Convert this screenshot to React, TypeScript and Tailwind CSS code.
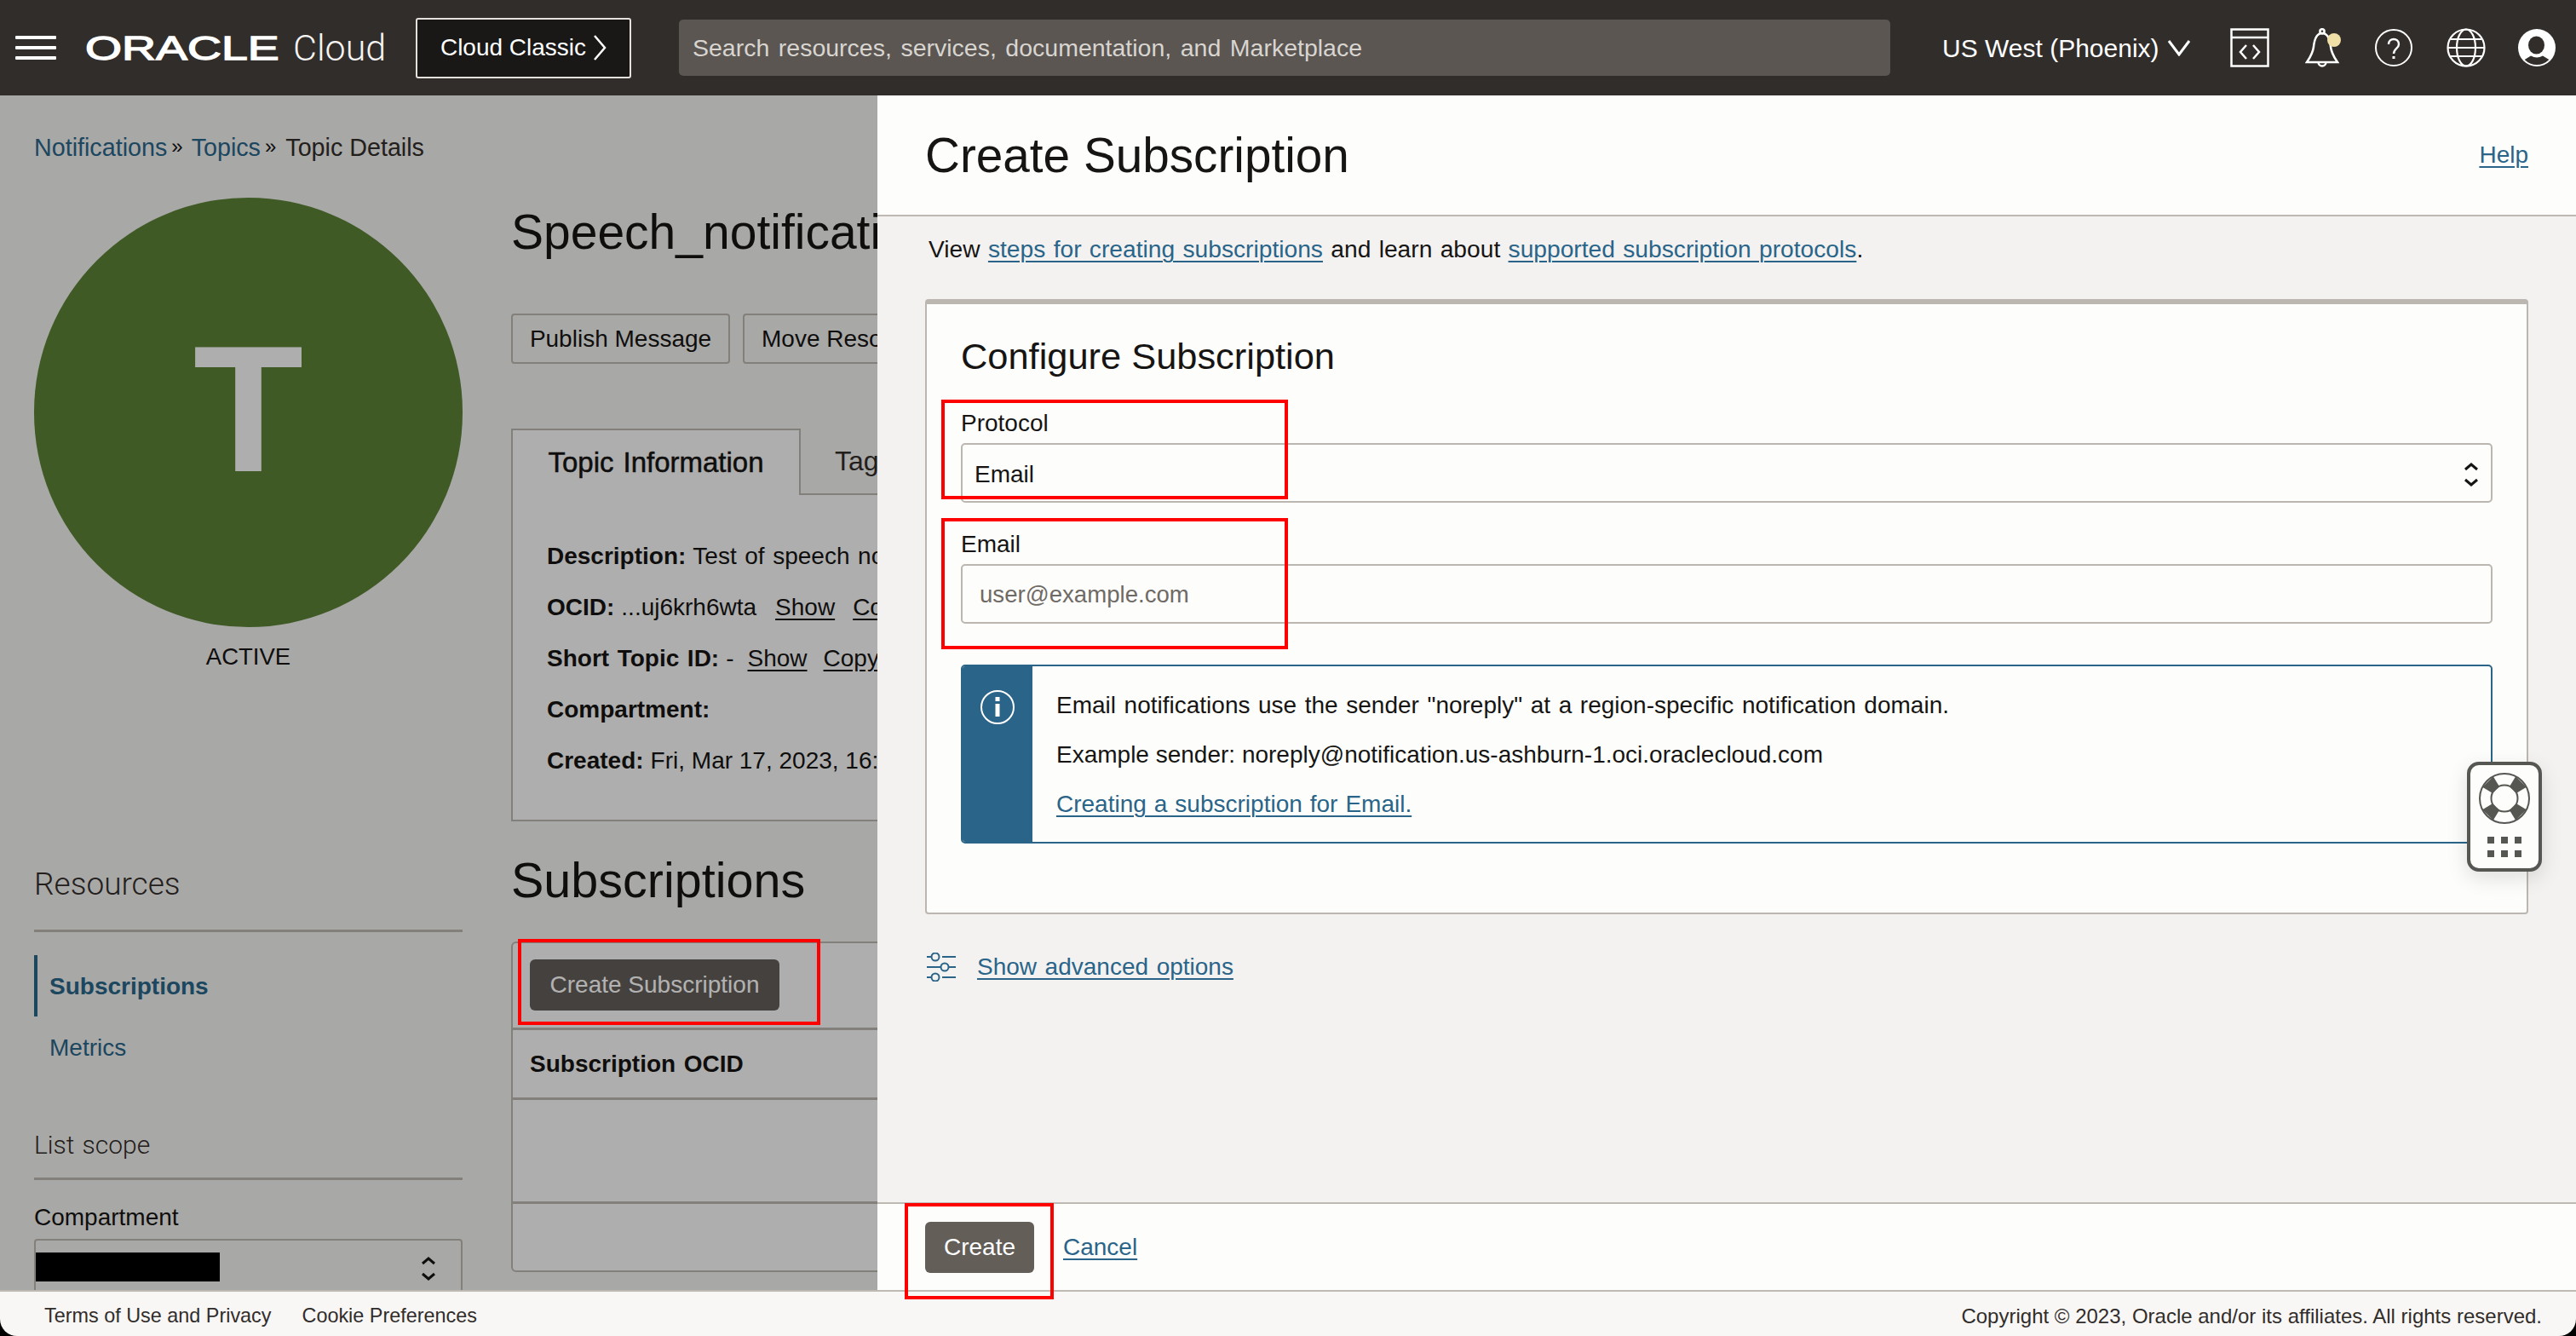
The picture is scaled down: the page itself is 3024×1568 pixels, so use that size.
import React from 'react';

const Link = ({ children }: { children: React.ReactNode }) => (
  <a className="text-[#2a6589] underline underline-offset-[4px] decoration-2">{children}</a>
);

const RedBox = ({ className }: { className: string }) => (
  <div className={`absolute border-[4px] border-[#ff0000] z-30 ${className}`} />
);

const UpDown = ({ className }: { className?: string }) => (
  <svg viewBox="0 0 18 30" className={className} fill="none" stroke="currentColor" strokeWidth="3">
    <path d="M2 9 L9 3 L16 9" />
    <path d="M2 21 L9 27 L16 21" />
  </svg>
);

const TopBar = () => (
  <header className="h-[112px] bg-[#312d2a] flex items-center text-white shrink-0">
    <svg viewBox="0 0 48 28" className="w-[48px] h-[28px] ml-[18px]" fill="white">
      <rect width="48" height="4" rx="1" />
      <rect y="12" width="48" height="4" rx="1" />
      <rect y="24" width="48" height="4" rx="1" />
    </svg>
    <div className="ml-[34px] w-[244px] h-[60px] flex items-center overflow-visible">
      <span className="inline-block origin-left scale-x-[1.42] text-[39px] leading-none [-webkit-text-stroke:1.3px_white]">ORACLE</span>
    </div>
    <span className="w-[108px] text-[43px] leading-none font-light font-['Roboto'] text-[#f5f4f2]">Cloud</span>
    <button className="ml-[36px] w-[253px] h-[71px] bg-[#1a1816] border-2 border-[#e4e1dd] rounded-[3px] flex items-center justify-center gap-[8px] text-[28px]">
      Cloud Classic
      <svg viewBox="0 0 16 32" className="w-[16px] h-[32px]" fill="none" stroke="white" strokeWidth="2.5">
        <path d="M2 2 L14 16 L2 30" />
      </svg>
    </button>
    <div className="ml-[56px] w-[1422px] h-[66px] bg-[#5b5652] rounded-[5px] flex items-center pl-[16px] text-[28.5px] [word-spacing:2.6px] text-[#d8d5d1]">
      Search resources, services, documentation, and Marketplace
    </div>
    <span className="ml-[61px] text-[30px] w-[264px] whitespace-nowrap">US West (Phoenix)</span>
    <svg viewBox="0 0 28 20" className="w-[28px] h-[20px]" fill="none" stroke="white" strokeWidth="3">
      <path d="M2 2 L14 18 L26 2" />
    </svg>
    {/* code editor */}
    <svg viewBox="0 0 46 46" className="ml-[46px] w-[46px] h-[46px]" fill="none" stroke="white" strokeWidth="2.5">
      <rect x="1.5" y="1.5" width="43" height="43" />
      <path d="M1.5 11 H44.5" />
      <path d="M19 20 L12 28 L19 36 M27 20 L34 28 L27 36" />
    </svg>
    <svg viewBox="0 0 42 46" className="ml-[42px] w-[42px] h-[46px]" fill="none" stroke="white" strokeWidth="2.5">
      <path d="M2 40 H38 C34 34 31 30 30 22 C29 12 26 6 20 6 C14 6 11 12 10 22 C9 30 6 34 2 40 Z" />
      <circle cx="20" cy="3.8" r="2.6" />
      <path d="M15.5 40 A4.5 4.5 0 0 0 24.5 40" />
      <circle cx="34" cy="14" r="8" fill="#f0dfa6" stroke="none" />
    </svg>
    <svg viewBox="0 0 44 44" className="ml-[40px] w-[44px] h-[44px]" fill="none" stroke="white" strokeWidth="2">
      <circle cx="22" cy="22" r="21" />
      <path d="M16 18 C16 10 28 10 28 18 C28 23 22 23 22 29" strokeWidth="2.4" />
      <rect x="20.5" y="32" width="3" height="3" fill="white" stroke="none" />
    </svg>
    <svg viewBox="0 0 46 46" className="ml-[40px] w-[46px] h-[46px]" fill="none" stroke="white" strokeWidth="2.2">
      <circle cx="23" cy="23" r="21.5" />
      <ellipse cx="23" cy="23" rx="11" ry="21.5" />
      <path d="M1.5 23 H44.5 M5 13 H41 M5 33 H41" />
    </svg>
    <svg viewBox="0 0 44 44" className="ml-[38px] w-[44px] h-[44px]">
      <circle cx="22" cy="22" r="22" fill="white" />
      <ellipse cx="21.5" cy="19" rx="9.5" ry="10.5" fill="#312d2a" />
      <path d="M7.7 36 L15 31.5 Q22 35.5 29 31.5 L36.3 36 A20 20 0 0 1 7.7 36 Z" fill="#312d2a" />
    </svg>
  </header>
);

const InfoRow = ({ children }: { children: React.ReactNode }) => (
  <div className="h-[60px] flex items-center whitespace-nowrap gap-[8px]">{children}</div>
);

const Bold = ({ children }: { children: React.ReactNode }) => <b className="text-[28px]">{children}</b>;

const DarkLink = ({ children, className }: { children: React.ReactNode; className?: string }) => (
  <a className={`underline underline-offset-[4px] ${className ?? 'ml-[11px]'}`}>{children}</a>
);

const Page = () => (
  <div className="absolute inset-0 bg-[#f1f1f0] text-[28px] [word-spacing:1.8px] text-[#161513] pl-[40px]">
    <div className="pt-[40px] h-[120px] flex items-start text-[28.7px]">
      <span className="h-[40px] leading-[42px] text-[#2a6589]">Notifications</span>
      <span className="h-[40px] leading-[40px] ml-[5px] mr-[10px] text-[24px]">»</span>
      <span className="h-[40px] leading-[42px] text-[#2a6589]">Topics</span>
      <span className="h-[40px] leading-[40px] ml-[5px] mr-[11px] text-[24px]">»</span>
      <span className="h-[40px] leading-[42px] text-[#312d2a] [word-spacing:0px]">Topic Details</span>
    </div>
    <div className="flex gap-[57px]">
      <aside className="w-[503px] shrink-0">
        <div className="w-[503px] h-[504px] rounded-full bg-[#5b8135] flex items-center justify-center pb-[8px]">
          <span className="text-[212px] font-bold leading-none text-[#fafafa]">T</span>
        </div>
        <p className="mt-[20px] h-[30px] leading-[30px] text-center text-[27.5px]">ACTIVE</p>
        <h3 className="mt-[227px] h-[50px] leading-[50px] text-[37px] text-[#312d2a] font-light font-['Roboto']">Resources</h3>
        <div className="mt-[28px] h-[3px] bg-[#bcb6b0]" />
        <div className="mt-[27px] h-[72px] border-l-[4px] border-[#2a6589] pl-[14px] pt-[2px] flex items-center font-bold text-[#2a6589]">Subscriptions</div>
        <div className="mt-[1px] h-[72px] pl-[18px] flex items-center text-[#2a6589]">Metrics</div>
        <h3 className="mt-[58px] h-[40px] leading-[40px] text-[30px] text-[#312d2a] font-light font-['Roboto']">List scope</h3>
        <div className="mt-[18px] h-[3px] bg-[#bcb6b0]" />
        <label className="block mt-[26px] h-[36px] leading-[36px]">Compartment</label>
        <div className="mt-[7px] h-[90px] border-2 border-[#bcb6b0] rounded-[4px] relative">
          <div className="absolute left-0 top-[14px] w-[216px] h-[34px] bg-black z-10" />
          <UpDown className="absolute right-[29px] top-[18px] w-[18px] h-[30px] text-[#161513]" />
        </div>
      </aside>
      <section className="flex-1 min-w-0 overflow-hidden">
        <h1 className="h-[80px] leading-[80px] text-[57px] whitespace-nowrap">Speech_notifications</h1>
        <div className="mt-[56px] flex gap-[15px]">
          <button className="h-[59px] w-[257px] border-2 border-[#bcb6b0] rounded-[4px]">Publish Message</button>
          <button className="h-[59px] px-[20px] border-2 border-[#bcb6b0] rounded-[4px]">Move Resource</button>
        </div>
        <div className="mt-[76px] flex h-[78px]">
          <div className="w-[340px] bg-[#fafafa] border-2 border-b-0 border-[#bcb6b0] flex items-center justify-center text-[33px] font-normal [-webkit-text-stroke:0.5px_#161513]">Topic Information</div>
          <div className="flex-1 border-b-2 border-[#bcb6b0] pl-[40px] flex items-center text-[32px] text-[#312d2a]">Tags</div>
        </div>
        <div className="bg-[#fafafa] border-2 border-t-0 border-[#bcb6b0] pl-[40px] pt-[42px] pb-[40px] h-[383px]">
          <InfoRow><Bold>Description:</Bold> Test of speech notifications</InfoRow>
          <InfoRow><Bold>OCID:</Bold> ...uj6krh6wta <DarkLink className="ml-[14px]">Show</DarkLink> <DarkLink className="ml-[13px]">Copy</DarkLink></InfoRow>
          <InfoRow><Bold>Short Topic ID:</Bold> - <DarkLink className="ml-[8px]">Show</DarkLink> <DarkLink>Copy</DarkLink></InfoRow>
          <InfoRow><Bold>Compartment:</Bold></InfoRow>
          <InfoRow><Bold>Created:</Bold> <span className="[word-spacing:0px]">Fri, Mar 17, 2023, 16:20:11 UTC</span></InfoRow>
        </div>
        <h2 className="mt-[29px] h-[80px] leading-[80px] text-[57.5px]">Subscriptions</h2>
        <div className="mt-[32px] h-[388px] bg-[#fafafa] border-2 border-[#bcb6b0] rounded-[6px] flex flex-col">
          <div className="h-[102px] border-b-[3px] border-[#bcb6b0] pl-[20px] pt-[19px]">
            <button className="w-[293px] h-[60px] bg-[#645e59] rounded-[6px] text-white">Create Subscription</button>
          </div>
          <div className="h-[82px] border-b-[3px] border-[#bcb6b0] pl-[20px] flex items-center font-bold">Subscription OCID</div>
          <div className="h-[122px] border-b-[3px] border-[#bcb6b0]" />
        </div>
      </section>
    </div>
  </div>
);

const Drawer = () => (
  <div className="absolute top-0 right-0 bottom-0 w-[1994px] bg-[#f3f2f1] flex flex-col text-[28px] [word-spacing:1.8px] text-[#161513] z-20">
    <div className="h-[142px] bg-[#fdfdfb] border-b-2 border-[#bfb9b3] flex items-center justify-between pl-[56px] pr-[56px] shrink-0">
      <h1 className="pt-[2px] text-[56.7px] leading-none [word-spacing:0px]">Create Subscription</h1>
      <Link>Help</Link>
    </div>
    <div className="flex-1 pl-[56px] pr-[56px]">
      <p className="mt-[18px] h-[40px] leading-[40px] pl-[4px] text-[28.2px] [word-spacing:1.5px]">
        View <Link>steps for creating subscriptions</Link> and learn about <Link>supported subscription protocols</Link>.
      </p>
      <div className="mt-[39px] h-[722px] bg-[#fdfdfb] border-2 border-t-[6px] border-[#bcb6b0] rounded-[4px] pl-[40px] pr-[40px] relative">
        <h2 className="mt-[34px] h-[54px] leading-[54px] text-[43.4px] [word-spacing:0px]">Configure Subscription</h2>
        <label className="block mt-[31px] h-[40px] leading-[42px]">Protocol</label>
        <div className="mt-[4px] h-[70px] border-2 border-[#bcb6b0] rounded-[5px] pl-[14px] pt-[3px] flex items-center justify-between pr-[14px]">
          <span>Email</span>
          <UpDown className="w-[18px] h-[30px]" />
        </div>
        <label className="block mt-[28px] h-[40px] leading-[42px]">Email</label>
        <div className="mt-[4px] h-[70px] border-2 border-[#bcb6b0] rounded-[5px] pl-[20px] pt-[1px] flex items-center text-[27.6px] text-[#6f6a65]">user@example.com</div>
        <div className="mt-[48px] h-[210px] border-2 border-[#2a6589] rounded-[5px] flex overflow-hidden">
          <div className="w-[82px] bg-[#2a6589] flex justify-center pt-[28px] shrink-0">
            <svg viewBox="0 0 40 40" className="w-[40px] h-[40px]" fill="none" stroke="white" strokeWidth="2">
              <circle cx="20" cy="20" r="19" />
              <rect x="17.5" y="16" width="5" height="15" fill="white" stroke="none" />
              <rect x="17.5" y="8" width="5" height="5" fill="white" stroke="none" />
            </svg>
          </div>
          <div className="pl-[28px] pt-[17px]">
            <p className="h-[58px] leading-[58px]">Email notifications use the sender "noreply" at a region-specific notification domain.</p>
            <p className="h-[58px] leading-[58px] [word-spacing:0px]">Example sender: noreply@notification.us-ashburn-1.oci.oraclecloud.com</p>
            <p className="h-[58px] leading-[58px] [word-spacing:1.2px]"><Link>Creating a subscription for Email.</Link></p>
          </div>
        </div>
      </div>
      <div className="mt-[40px] flex items-center gap-[25px] pl-[2px] h-[44px]">
        <svg viewBox="0 0 34 34" className="w-[34px] h-[34px]" fill="none" stroke="#2a6589" strokeWidth="2">
          <path d="M0 5 H5 M18 5 H34 M0 17 H16 M26 17 H34 M0 29 H5 M18 29 H34" />
          <circle cx="10" cy="5" r="4.5" />
          <circle cx="21" cy="17" r="4.5" />
          <circle cx="10" cy="29" r="4.5" />
        </svg>
        <Link>Show advanced options</Link>
      </div>
    </div>
    <div className="h-[103px] bg-[#fdfdfb] border-t-2 border-[#bfb9b3] pl-[56px] flex items-center gap-[34px] shrink-0">
      <button className="w-[128px] h-[60px] bg-[#645e59] rounded-[6px] text-white">Create</button>
      <Link>Cancel</Link>
    </div>
  </div>
);

const HelpWidget = () => (
  <div className="absolute left-[2896px] top-[894px] w-[88px] h-[129px] bg-[#fdfdfb] border-[4px] border-[#565652] rounded-[14px] shadow-[0_8px_24px_rgba(0,0,0,0.12)] z-30 flex flex-col items-center pt-[9px]">
    <svg viewBox="0 0 60 60" className="w-[60px] h-[60px]">
      <circle cx="30" cy="30" r="29" fill="none" stroke="#565652" strokeWidth="2" />
      <circle cx="30" cy="30" r="15.5" fill="none" stroke="#565652" strokeWidth="2" />
      {[0, 90, 180, 270].map((a) => (
        <polygon key={a} points="43.8,35.9 35.9,43.8 43.2,55.8 55.8,43.2" fill="#565652" transform={`rotate(${a} 30 30)`} />
      ))}
    </svg>
    <div className="mt-[15px] grid grid-cols-3 gap-[8px]">
      {[0, 1, 2, 3, 4, 5].map((i) => (
        <div key={i} className="w-[8px] h-[8px] bg-[#565652]" />
      ))}
    </div>
  </div>
);

const Footer = () => (
  <footer className="h-[54px] border-t-2 border-[#bfb9b3] bg-[#f8f7f6] flex items-center justify-between pl-[52px] pr-[40px] pt-[6px] text-[#312d2a] shrink-0 rounded-b-[20px]">
    <div className="flex gap-[36px] text-[23.4px]">
      <span>Terms of Use and Privacy</span>
      <span>Cookie Preferences</span>
    </div>
    <span className="text-[24px]">Copyright © 2023, Oracle and/or its affiliates. All rights reserved.</span>
  </footer>
);

export default function App() {
  return (
    <div className="relative w-[3024px] h-[1568px] overflow-hidden bg-black flex flex-col font-['Liberation_Sans',Arial,sans-serif]">
      <TopBar />
      <main className="relative flex-1 overflow-hidden">
        <Page />
        <div className="absolute inset-0 bg-black/30 z-10" />
        <Drawer />
      </main>
      <Footer />
      <HelpWidget />
      <RedBox className="left-[1105px] top-[469px] w-[407px] h-[117px]" />
      <RedBox className="left-[1105px] top-[608px] w-[407px] h-[154px]" />
      <RedBox className="left-[608px] top-[1102px] w-[355px] h-[101px]" />
      <RedBox className="left-[1062px] top-[1412px] w-[175px] h-[113px]" />
    </div>
  );
}
